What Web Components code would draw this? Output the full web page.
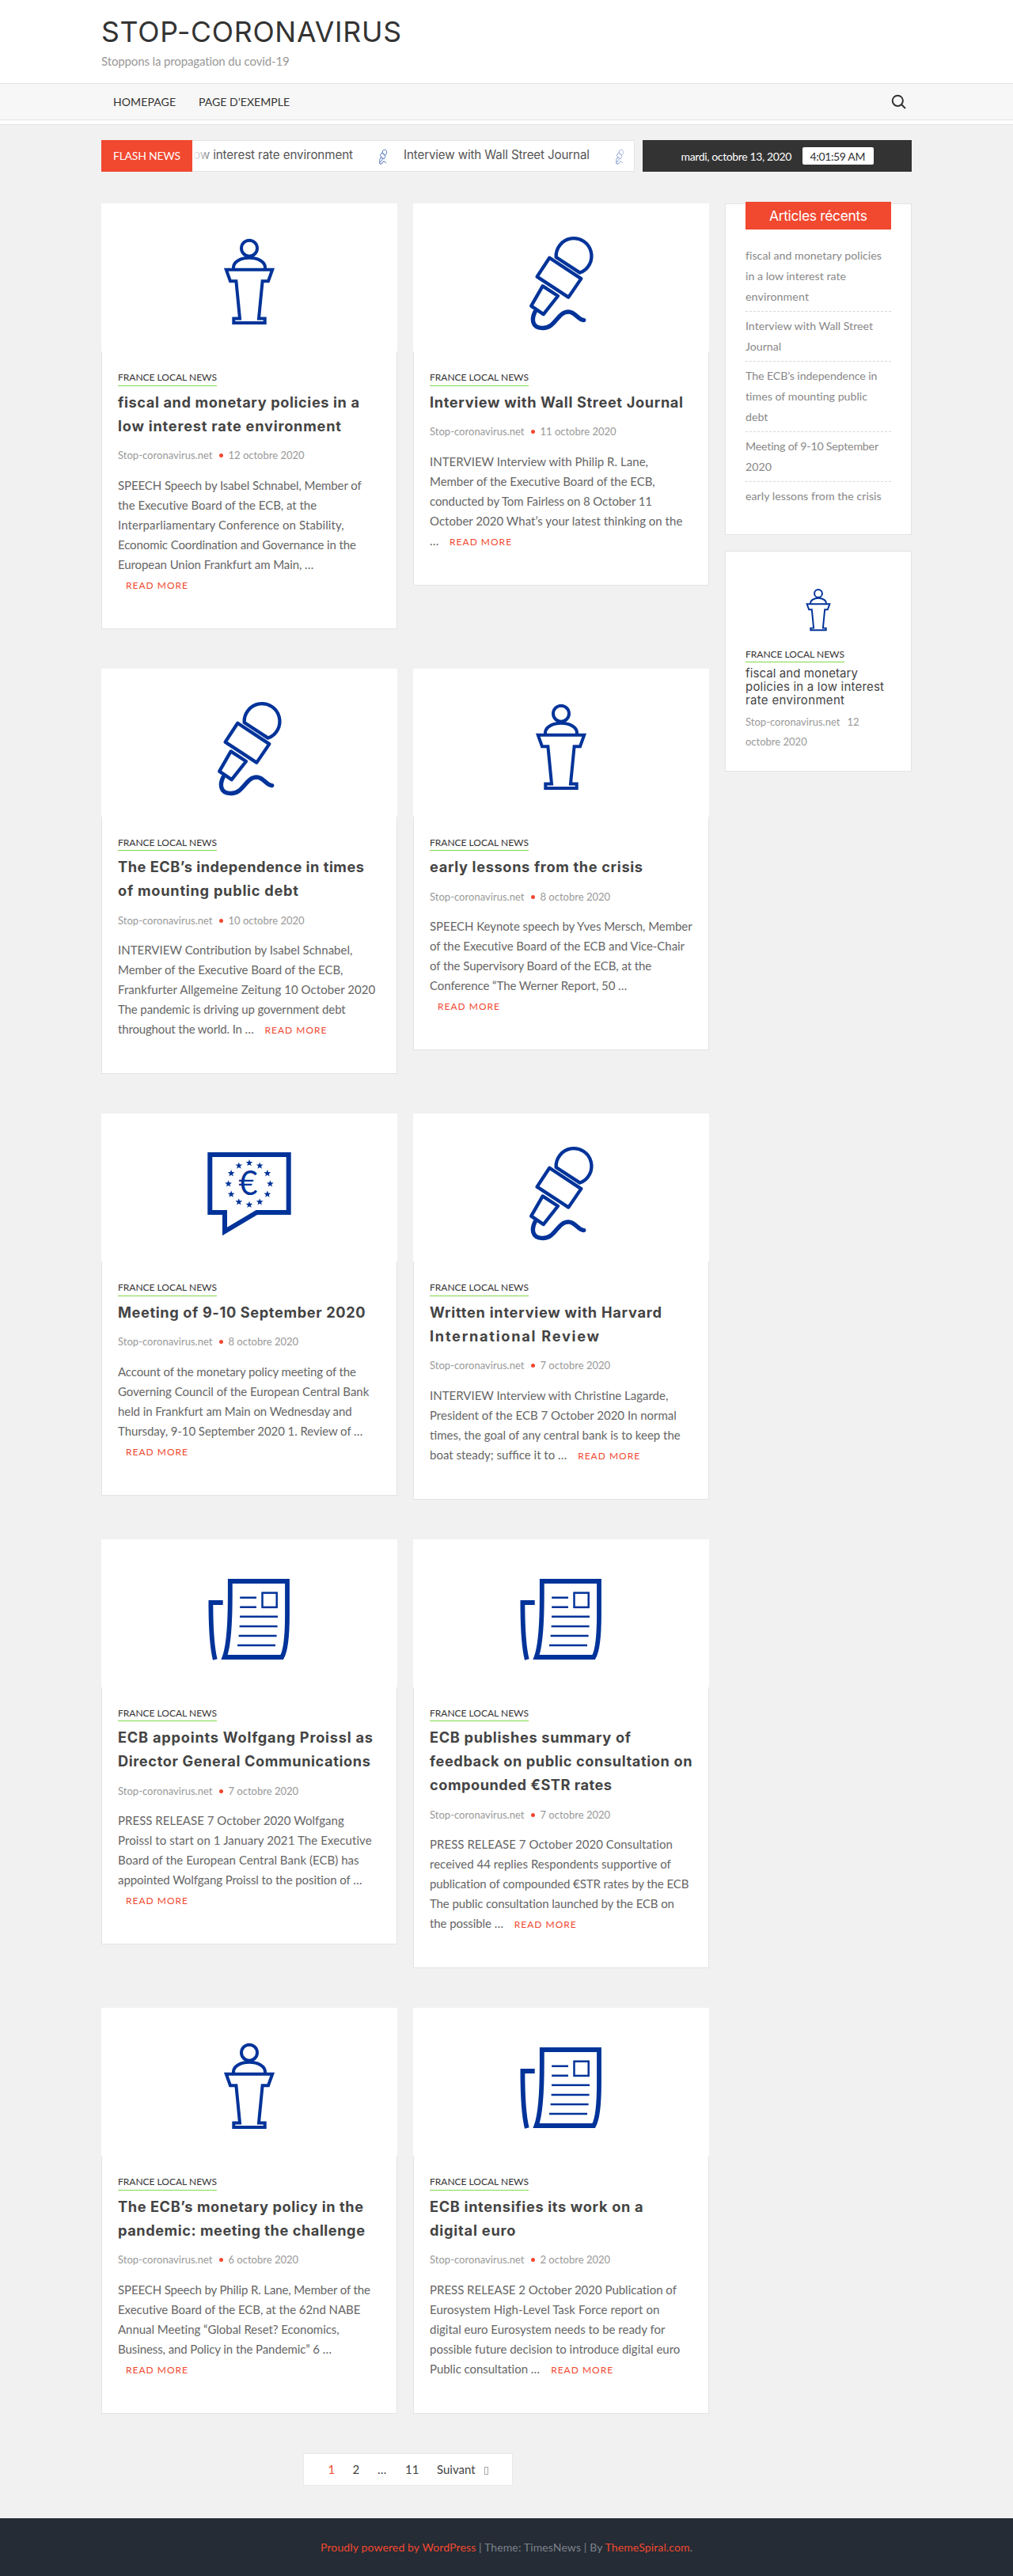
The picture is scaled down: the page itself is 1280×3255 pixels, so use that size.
<!DOCTYPE html>
<html lang="fr">
<head>
<meta charset="utf-8">
<title>STOP-CORONAVIRUS</title>
<style>
html,body{margin:0;padding:0}
body{background:#f1f1f1;font-family:Lato,"Liberation Sans",sans-serif;color:#666;font-size:15px;--display:Inter,"Open Sans",sans-serif;--red:#f14830}
</style>
</head>
<body>
<news-page></news-page>
<script>
const define=(name,html,after)=>customElements.define(name,class extends HTMLElement{
  connectedCallback(){
    if(this.shadowRoot)return;
    const t=document.createElement('template');
    t.innerHTML=typeof html==='function'?html(this):html;
    this.attachShadow({mode:'open'}).append(t.content.cloneNode(true));
    if(after)after(this);
  }
});

/* One line of text, tracked so that it fills the width given in "w". */
define('fit-text','<style>:host{display:inline-block;white-space:nowrap;text-align:left}span{display:inline-block}</style><span><slot></slot></span>',el=>{
  const s=el.shadowRoot.querySelector('span'),w=+el.getAttribute('w'),n=el.textContent.length;
  const ls=(w-s.getBoundingClientRect().width)/(n-1);
  s.style.letterSpacing=ls.toFixed(3)+'px';
  el.style.width=w+'px';
});

const star=(cx,cy,r)=>{
  let p='';
  for(let i=0;i<10;i++){const a=-Math.PI/2+i*Math.PI/5,q=i%2?r*.42:r;p+=(cx+q*Math.cos(a)).toFixed(1)+','+(cy+q*Math.sin(a)).toFixed(1)+' ';}
  return `<polygon points="${p}" fill="#039" stroke="none"/>`;
};
const ring=()=>Array.from({length:12},(_,i)=>star(187+26.4*Math.sin(i*Math.PI/6),88.9-26.4*Math.cos(i*Math.PI/6),4.6)).join('');
const art={
  podium:`<g stroke-width="4"><circle cx="187" cy="56.7" r="10"/><path d="M167 83v-2c0-7 9-12.2 20-12.2s20 5.2 20 12.2v2"/><path d="M157.8 83.8H216.2L211 98.2H203.6L199 145.6H206.7V151H167.3V145.6H175L170.4 98.2H163Z"/></g>`,
  mic:`<g stroke-width="4.3" stroke-linejoin="round"><path d="M180.7 68A22.4 22.4 0 1 1 210.7 87.6Z"/><path d="M172.3 68.7L212.3 95.1 196.3 118.6 156.6 92.6Z"/><path d="M163.7 104.4L183 117 164.7 140.1 149.2 129.6Z"/><path d="M154 137C150 145 149 157 163.5 157.5C180 158 182 137 196.3 137C205 137 208 147 215.7 147.6" stroke-width="5.4" stroke-linecap="round"/></g>`,
  bubble:`<path stroke-width="6" d="M137.3 52H236.7V125H196.4L156 149V125H137.3Z"/>${ring()}<text x="173.4" y="103.3" font-family="Lato" font-size="42" textLength="24" lengthAdjust="spacingAndGlyphs" fill="#039" stroke="none">€</text>`,
  paper:`<path stroke-width="5.8" d="M162.8 53H235V95C235 120 233.5 140 228.2 149H155.6C161 135 162.8 105 162.8 70Z"/><path stroke-width="5.8" d="M153.7 80H138.4C138.4 110 139.5 135 143.8 152"/><g stroke-width="2.5"><rect x="203.5" y="67.7" width="18.2" height="18.2"/><path d="M175.2 73.8H196M175.2 85.7H196M175 97.8H223M174.6 110H222.6M173.6 122H221.6M172 134H220"/></g>`
};
define('news-art',el=>`<style>:host{display:block;background:#fff}svg{display:block;width:100%;height:100%}</style><svg viewBox="0 0 374 187" preserveAspectRatio="none" fill="none" stroke="#039">${art[el.getAttribute('kind')]}</svg>`);

define('category-tag','<style>:host{display:block;height:19.5px}span{display:inline-block;font-size:12px;line-height:18px;padding-bottom:.5px;color:#333;border-bottom:1px solid #82d849;vertical-align:top}</style><span><slot></slot></span>');

define('news-card',el=>`<style>
:host{display:block;width:374px;background:#fff}
news-art{height:187px}
.body{border:1px solid #e4e4e4;border-top:0;padding:24px 0 42.9px 20px}
h2{margin:5.1px 0 12.4px;font:bold 18.2px/30px var(--display);color:#444}
h2 ::slotted(fit-text){display:block}
.meta{display:flex;align-items:center;height:20px;line-height:20px;font-size:13px;color:#999}
.meta i{width:5px;height:5px;border-radius:50%;background:var(--red);margin:1px 6.5px 0 8.5px}
p{margin:15.7px 0 0;line-height:25px;white-space:nowrap}
.more{display:inline-block;margin-left:10px;font-size:12px;letter-spacing:1px;color:var(--red);line-height:20px}
</style>
<news-art kind="${el.getAttribute('kind')}"></news-art>
<div class="body"><category-tag>FRANCE LOCAL NEWS</category-tag>
<h2><slot name="title"></slot></h2>
<div class="meta"><fit-text w="119.5">Stop-coronavirus.net</fit-text><i></i><span>${el.getAttribute('date')}</span></div>
<p><slot></slot> <span class="more">READ MORE</span></p></div>`);

define('site-header',`<style>
:host{display:block;background:#fff;border-bottom:1px solid #e4e4e4}
.in{width:1024px;margin:0 auto}
.brand{height:105px}
h1{margin:0;padding-top:20px;font:400 35.6px/42px var(--display);color:#333}
p{margin:4px 0 0;font-size:15px;line-height:22px;color:#999}
nav{height:45px;background:#f7f7f7;border:solid #e4e4e4;border-width:1px 0;margin-bottom:5px}
nav .in{display:flex;align-items:center;height:45px;color:#333;font-size:14px;gap:29px}
nav .in>:first-child{margin-left:15px}
svg{margin-left:auto;margin-right:7px;margin-top:-1px}
</style>
<div class="brand"><div class="in"><h1><fit-text w="379">STOP-CORONAVIRUS</fit-text></h1><p><fit-text w="238">Stoppons la propagation du covid-19</fit-text></p></div></div>
<nav><div class="in"><fit-text w="79">HOMEPAGE</fit-text><fit-text w="115">PAGE D’EXEMPLE</fit-text>
<svg width="19" height="19" viewBox="0 0 19 19" fill="none" stroke="#333" stroke-width="2"><circle cx="8.3" cy="8.3" r="6.6"/><path d="M12.8 12.8L18 18"/></svg></div></nav>`);

define('flash-bar',`<style>
:host{display:flex;width:1024px;height:40px;margin:19px auto 0}
.label{width:115px;background:var(--red);color:#fff;font-size:14px;line-height:40px;text-align:center}
.tick{width:559px;box-sizing:border-box;background:#fff;border:1px solid #e4e4e4;border-left:0;overflow:hidden;position:relative;display:flex;font:15.2px/36px var(--display);color:#555;padding-left:1px}
.tick news-art{width:46px;height:30px;margin:4px 3px 0 15px;flex:none;background:none}
.tick fit-text{flex:none}
.tick::after{content:"";position:absolute;inset:0;background:linear-gradient(90deg,#fff,#fff0 30px,#fff0 528px,#fff)}
.date{width:340px;margin-left:10px;background:#333;color:#fff;display:flex;align-items:center;justify-content:center;gap:13px;font-size:14px}
.time{background:#fff;color:#333;border-radius:2px;height:22px;line-height:23px;width:90px;text-align:center}
</style>
<div class="label"><fit-text w="85">FLASH NEWS</fit-text></div>
<div class="tick"><fit-text w="202">ow interest rate environment</fit-text><news-art kind="mic"></news-art><fit-text w="235">Interview with Wall Street Journal</fit-text><news-art kind="mic"></news-art></div>
<div class="date"><fit-text w="140">mardi, octobre 13, 2020</fit-text><div class="time"><fit-text w="70">4:01:59 AM</fit-text></div></div>`);

define('side-panel',`<style>
:host{display:block;background:#fff;border:1px solid #e4e4e4;box-sizing:border-box;width:236px;padding:0 25px}
</style><slot></slot>`);

define('recent-posts',`<style>
:host{display:flow-root;height:416.6px}
h3{margin:-3px 0 0;height:35px;background:var(--red);color:#fff;font:400 17.5px/35px var(--display);text-align:center;position:relative}
ul{list-style:none;margin:14.6px 0 0;padding:0;font-size:14.2px;line-height:26px;color:#888}
li{padding:5px 0 5.5px;border-bottom:1px dashed #d8d8d8}
li+li{padding-top:4.5px}
li:last-child{border:0}
</style><h3><fit-text w="124">Articles récents</fit-text></h3>
<ul><li><fit-text w="171.7">fiscal and monetary policies</fit-text><br><fit-text w="127">in a low interest rate</fit-text><br><fit-text w="80">environment</fit-text></li><li><fit-text w="161">Interview with Wall Street</fit-text><br>Journal</li><li><fit-text w="166.5">The ECB’s independence in</fit-text><br><fit-text w="154.5">times of mounting public</fit-text><br>debt</li><li><fit-text w="168.3">Meeting of 9-10 September</fit-text><br>2020</li><li><fit-text w="171.7">early lessons from the crisis</fit-text></li></ul>`);

define('featured-post',`<style>
:host{display:block;padding-top:25px;height:252.6px}
news-art{width:184px;height:92px;margin-bottom:4.4px}
h4{margin:5px 0 0;font:400 15px/17px var(--display);color:#444}
h4 fit-text{display:block}
p{margin:7px 0 0;font-size:13px;line-height:25px;color:#999}
p span{margin-left:9px}
</style><news-art kind="podium"></news-art><category-tag>FRANCE LOCAL NEWS</category-tag>
<h4><fit-text w="142">fiscal and monetary</fit-text><fit-text w="175">policies in a low interest</fit-text><fit-text w="125">rate environment</fit-text></h4>
<p><fit-text w="119.5">Stop-coronavirus.net</fit-text><span>12</span><br>octobre 2020</p>`);

define('page-links',`<style>
:host{display:flex;box-sizing:border-box;width:265px;height:41px;margin:50px 0 0 254.5px;background:#fff;border:1px solid #e9e9e9;padding-left:31px;align-items:center;color:#444;line-height:39px}
span{flex:none}
b{font-weight:400;color:var(--red)}
i{width:3.5px;height:8px;border:1px solid #aaa;margin:3px 0 0 11px}
</style><span style="width:31px"><b>1</b></span><span style="width:31.5px">2</span><span style="width:35px">…</span><span style="width:40px">11</span><span>Suivant</span><i></i>`);

define('site-footer',`<style>
:host{display:flex;justify-content:center;height:73px;background:#252c35;color:#7d828c;font-size:14px;line-height:74px}
a{color:var(--red)}
</style><fit-text w="470"><a>Proudly powered by WordPress</a> | Theme: TimesNews | By <a>ThemeSpiral.com</a>.</fit-text>`);

/* kind, date, title lines with widths, excerpt lines, excerpt line widths */
const posts=[
['podium','12 octobre 2020',[['fiscal and monetary policies in a',305],['low interest rate environment',282]],'SPEECH Speech by Isabel Schnabel, Member of|the Executive Board of the ECB, at the|Interparliamentary Conference on Stability,|Economic Coordination and Governance in the|European Union Frankfurt am Main, …|',[307.7,251.3,285.7,301.3,247.3]],
['mic','11 octobre 2020',[['Interview with Wall Street Journal',320]],'INTERVIEW Interview with Philip R. Lane,|Member of the Executive Board of the ECB,|conducted by Tom Fairless on 8 October 11|October 2020 What’s your latest thinking on the|…',[276,285,281,319.3]],
['mic','10 octobre 2020',[['The ECB’s independence in times',311],['of mounting public debt',228]],'INTERVIEW Contribution by Isabel Schnabel,|Member of the Executive Board of the ECB,|Frankfurter Allgemeine Zeitung 10 October 2020|The pandemic is driving up government debt|throughout the world. In …',[296.7,284.7,325.3,287.7,171.7]],
['podium','8 octobre 2020',[['early lessons from the crisis',269]],'SPEECH Keynote speech by Yves Mersch, Member|of the Executive Board of the ECB and Vice-Chair|of the Supervisory Board of the ECB, at the|Conference “The Werner Report, 50 …|',[331.7,322.3,280.3,249.3]],
['bubble','8 octobre 2020',[['Meeting of 9-10 September 2020',312.5]],'Account of the monetary policy meeting of the|Governing Council of the European Central Bank|held in Frankfurt am Main on Wednesday and|Thursday, 9-10 September 2020 1. Review of …|',[301.3,317.3,295.7,309.3]],
['mic','7 octobre 2020',[['Written interview with Harvard',293],['International Review',214]],'INTERVIEW Interview with Christine Lagarde,|President of the ECB 7 October 2020 In normal|times, the goal of any central bank is to keep the|boat steady; suffice it to …',[]],
['paper','7 octobre 2020',[['ECB appoints Wolfgang Proissl as',322],['Director General Communications',319]],'PRESS RELEASE 7 October 2020 Wolfgang|Proissl to start on 1 January 2021 The Executive|Board of the European Central Bank (ECB) has|appointed Wolfgang Proissl to the position of …|',[285.7,320.9,304.6,308.7]],
['paper','7 octobre 2020',[['ECB publishes summary of',254],['feedback on public consultation on',331.5],['compounded €STR rates',230]],'PRESS RELEASE 7 October 2020 Consultation|received 44 replies Respondents supportive of|publication of compounded €STR rates by the ECB|The public consultation launched by the ECB on|the possible …',[307.1,305.1,327.6,309.2,92.9]],
['podium','6 octobre 2020',[['The ECB’s monetary policy in the',310],['pandemic: meeting the challenge',312]],'SPEECH Speech by Philip R. Lane, Member of the|Executive Board of the ECB, at the 62nd NABE|Annual Meeting “Global Reset? Economics,|Business, and Policy in the Pandemic” 6 …|',[318.9,306.6,280,269.9]],
['paper','2 octobre 2020',[['ECB intensifies its work on a',269.5],['digital euro',108.5]],'PRESS RELEASE 2 October 2020 Publication of|Eurosystem High-Level Task Force report on|digital euro Eurosystem needs to be ready for|possible future decision to introduce digital euro|Public consultation …',[312.2,290.3,297.4,316.3,139.3]]
];
const fit=(s,w,extra='')=>w?`<fit-text ${extra} w="${w}">${s}</fit-text>`:s;
const card=([k,d,t,b,ws])=>`<news-card kind="${k}" date="${d}">${t.map(([s,w])=>fit(s,w,'slot="title"')).join('')}${b.split('|').map((s,i)=>fit(s,ws[i])).join('<br>')}</news-card>`;

define('news-page',`<style>
:host{display:block}
main{display:flex;justify-content:space-between;width:1024px;margin:40px auto 0;height:2925px}
.grid{display:grid;grid-template-columns:374px 374px;gap:50px 20px;align-items:start}
aside{display:flex;flex-direction:column;gap:20px}
</style>
<site-header></site-header><flash-bar></flash-bar>
<main><section><div class="grid">${posts.map(card).join('')}</div><page-links></page-links></section>
<aside><side-panel><recent-posts></recent-posts></side-panel><side-panel><featured-post></featured-post></side-panel></aside></main>
<site-footer></site-footer>`);
</script>
</body>
</html>
